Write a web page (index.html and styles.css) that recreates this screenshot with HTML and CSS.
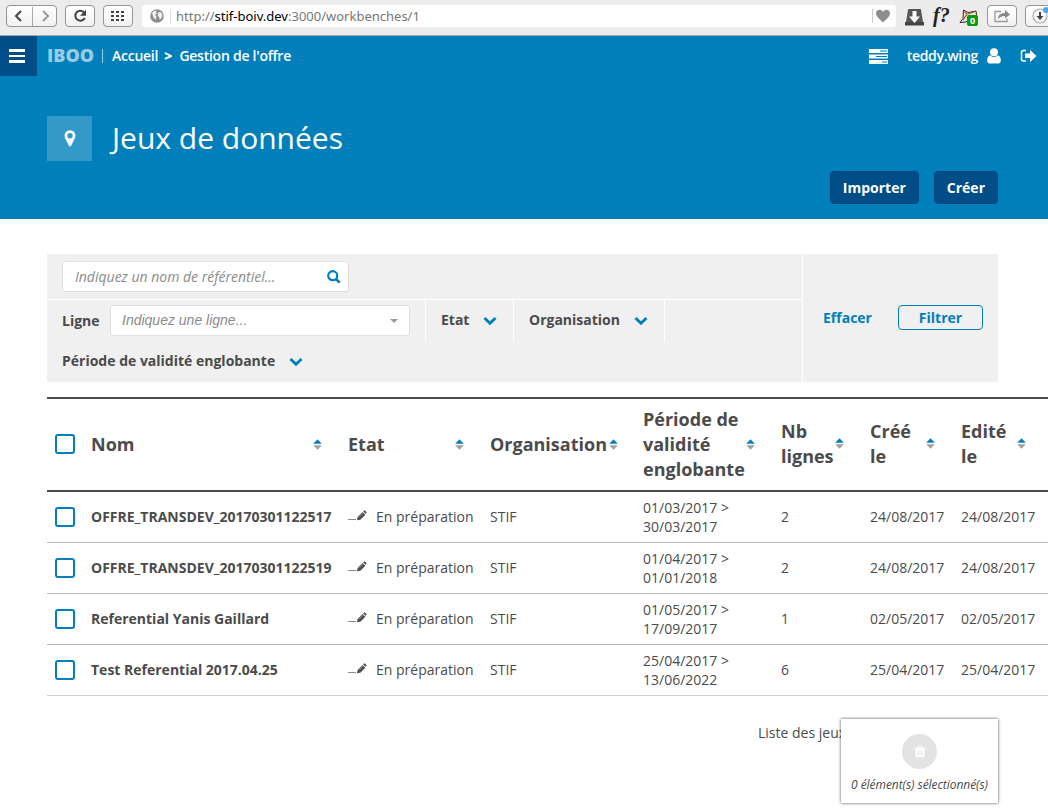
FILE: index.html
```html
<!DOCTYPE html>
<html lang="fr">
<head>
  <meta charset="UTF-8" />
  <meta name="viewport" content="width=device-width, initial-scale=1.0" />
  <title>Jeux de données</title>
  <link rel="stylesheet" href="styles.css">
</head>
<body>
  <!-- shared icons -->
  <svg class="sprite" aria-hidden="true">
    <symbol id="chevron" viewBox="0 0 14 10"><path d="M1.500 2L7 7.300 12.500 2" fill="none" stroke="#007fbb" stroke-width="2.900"/></symbol>
    <symbol id="sort" viewBox="0 0 9 11"><path d="M.2 4.800L4.500.3l4.300 4.500z" fill="#007fbb"/><path d="M.2 6.300h8.600L4.500 10.700z" fill="#a0a0a0"/></symbol>
    <symbol id="pencil" viewBox="0 0 20 12"><path d="M0 9h8v1H0z" fill="#8a8a8a"/><path d="M9 10.300l.6-3.300 5-5 2.700 2.700-5 5z" fill="#4b4b4b"/><path d="M15.200 1.400l.9-.9q.4-.3.8 0l1.500 1.500q.4.500 0 .9l-.8.9z" fill="#4b4b4b"/><path d="M11 7.200l4.200-4.200" stroke="#aaa" stroke-width=".7"/></symbol>
  </svg>

  <div class="browser">
    <div class="btn nav">
      <svg width="50" height="20" viewBox="0 0 50 20"><path d="M14 5L9 10l5 5" fill="none" stroke="#444" stroke-width="2"/><path d="M25.500 1v19" stroke="#aaa"/><path d="M36 5l5 5-5 5" fill="none" stroke="#999" stroke-width="2"/></svg>
    </div>
    <div class="btn reload">
      <svg width="16" height="16" viewBox="0 0 16 16"><path d="M12.300 4.600A5 5 0 1 0 12.800 10" fill="none" stroke="#444" stroke-width="2"/><path d="M14 1.800v6H8z" fill="#444"/></svg>
    </div>
    <div class="btn grid">
      <svg width="14" height="12" viewBox="0 0 14 12"><path d="M0 2h14M0 6h14M0 10h14" stroke="#444" stroke-width="2" stroke-dasharray="3 2"/></svg>
    </div>
    <div class="address">
      <svg width="14" height="14" viewBox="0 0 14 14"><circle cx="7" cy="7" r="6.800" fill="#8c8c8c"/><path d="M2 4l2-2 3-.4-1 2 1 1-2 1.500 1.500 1.500-1 3.400-2-2.500z" fill="#eee"/><path d="M8.500 3l3 .5 1 3.500-1.300 2.500-1.500 1.200L9 8 7.500 6.500z" fill="#eee"/></svg>
      <span class="url"><span>http://</span>stif-boiv.dev<span>:3000/workbenches/1</span></span>
      <svg class="heart" width="22" height="16" viewBox="0 0 22 16"><path d="M.5 1v14" stroke="#ccc"/><path d="M11 14.500C7.500 11 4 8.500 4 5.500 4 1.500 9 .5 11 4c2-3.500 7-2.500 7 1.500 0 3-3.500 5.500-7 9z" fill="#8e8e8e"/></svg>
    </div>
    <div class="extensions">
      <svg width="19" height="18" viewBox="0 0 19 18"><path d="M3 2q0-1 1-1h11q1 0 1 1l2 12H1z" fill="#555"/><path d="M0 14h19v3.500H0z" fill="#444"/><path d="M7.500 3h4v5.500h3.500L9.500 15 4 8.500h3.500z" fill="#fff"/></svg>
      <span class="whatfont">f?</span>
      <span class="fox">
        <svg width="19" height="18" viewBox="0 0 19 18"><path d="M1 14.500l3-4L4.500 2 9 4.500l8-1.500.5 4L12 10l-5 4z" fill="#efe6da" stroke="#3b2b20"/><path d="M5.500 3.500L8 6l-4 6M9 6l6-2" fill="none" stroke="#a45d2d" stroke-width="1.300"/></svg>
        <span class="count">0</span>
      </span>
    </div>
    <div class="btn share">
      <svg width="18" height="16" viewBox="0 0 18 16"><path d="M8 3.500H2v10h12v-3" fill="none" stroke="#999" stroke-width="1.300"/><path d="M5 11c0-4 3-6 7-6V2l5 4.500-5 4V8C9 8 7 9 5 11z" fill="#888"/></svg>
    </div>
    <div class="btn download">
      <svg width="18" height="18" viewBox="0 0 18 18"><circle cx="9" cy="9" r="7" fill="none" stroke="#aaa" stroke-width="1.200"/><path d="M8 5h2v4h2.500L9 13 5.500 9H8z" fill="#444"/></svg>
      <span class="dot"></span>
    </div>
  </div>

  <header>
    <div class="topbar">
      <div class="burger"><span></span><span></span><span></span></div>
      <div class="brand">IBOO</div>
      <div class="breadcrumb"><span>Accueil</span><b>&gt;</b><span class="current">Gestion de l'offre</span></div>
      <div class="user">
        <svg class="tasks" width="19" height="15" viewBox="0 0 19 15"><path d="M0 0h19v4H0zM0 5.500h19v4H0zM0 11h19v4H0z" fill="#fff"/><path d="M11 2h7M7 7.500h11M13 13h5" stroke="#007fbb" stroke-width="1"/></svg>
        <span class="name">teddy.wing</span>
        <svg class="person" width="14" height="16" viewBox="0 0 14 16"><circle cx="7" cy="4.200" r="4" fill="#fff"/><path d="M3.500 7.500Q7 10.500 10.500 7.500q3.500 0 3.300 5.500Q13.500 15.600 11.500 15.600h-9Q.4 15.600.2 13 0 7.500 3.500 7.500z" fill="#fff"/></svg>
        <svg class="logout" width="17" height="14" viewBox="0 0 17 14"><path d="M6 1.500H3.500q-2 0-2 2v6.500q0 2 2 2H6" fill="none" stroke="#fff" stroke-width="1.500"/><path d="M5 4.500h5V1l6.500 6-6.500 6V9H5z" fill="#fff"/></svg>
      </div>
    </div>
    <div class="title">
      <div class="title-icon">
        <svg width="12" height="17" viewBox="0 0 12 17"><path fill-rule="evenodd" d="M6 .3a5.300 5.300 0 0 1 5.400 5.400c0 1-.2 1.700-.5 2.400L7.200 15.700q-1.200 1.500-2.400 0L1.100 8.100C.8 7.400.6 6.700.6 5.700A5.300 5.300 0 0 1 6 .3zM6 3a2.700 2.700 0 1 0 0 5.400A2.700 2.700 0 0 0 6 3z" fill="#fff"/></svg>
      </div>
      <h1>Jeux de données</h1>
    </div>
    <div class="actions">
      <a class="action">Importer</a>
      <a class="action">Créer</a>
    </div>
  </header>

  <main>
    <form class="filters">
      <div class="fields">
        <div class="row search-row">
          <div class="input search">
            <span>Indiquez un nom de référentiel...</span>
            <svg width="14" height="14" viewBox="0 0 14 14"><circle cx="5.700" cy="5.700" r="4.500" fill="none" stroke="#007fbb" stroke-width="2.200"/><path d="M9 9l3.700 3.700" stroke="#007fbb" stroke-width="2.600"/></svg>
          </div>
        </div>
        <div class="row">
          <div class="field line">
            <label>Ligne</label>
            <div class="input select"><span>Indiquez une ligne...</span><i class="caret"></i></div>
          </div>
          <div class="field state">Etat<svg class="chevron"><use href="#chevron"/></svg></div>
          <div class="field orga">Organisation<svg class="chevron"><use href="#chevron"/></svg></div>
        </div>
        <div class="row last">
          <div class="field period">Période de validité englobante<svg class="chevron"><use href="#chevron"/></svg></div>
        </div>
      </div>
      <div class="submit">
        <a class="clear">Effacer</a>
        <a class="filter">Filtrer</a>
      </div>
    </form>

    <table>
      <colgroup>
        <col class="c-check"><col class="c-name"><col class="c-state"><col class="c-orga"><col class="c-period"><col class="c-lines"><col class="c-created"><col class="c-edited">
      </colgroup>
      <thead>
        <tr>
          <th><span class="checkbox"></span></th>
          <th><div class="head">Nom<svg class="sort"><use href="#sort"/></svg></div></th>
          <th><div class="head">Etat<svg class="sort"><use href="#sort"/></svg></div></th>
          <th><div class="head">Organisation<svg class="sort"><use href="#sort"/></svg></div></th>
          <th><div class="head">Période de<br>validité<br>englobante<svg class="sort"><use href="#sort"/></svg></div></th>
          <th class="two-lines"><div class="head">Nb<br>lignes<svg class="sort"><use href="#sort"/></svg></div></th>
          <th class="two-lines"><div class="head">Créé<br>le<svg class="sort"><use href="#sort"/></svg></div></th>
          <th class="two-lines"><div class="head">Edité<br>le<svg class="sort"><use href="#sort"/></svg></div></th>
        </tr>
      </thead>
      <tbody>
        <tr>
          <td><span class="checkbox"></span></td>
          <td class="name">OFFRE_TRANSDEV_20170301122517</td>
          <td><svg class="pencil"><use href="#pencil"/></svg>En préparation</td>
          <td>STIF</td>
          <td class="dates">01/03/2017 &gt;<br>30/03/2017</td>
          <td>2</td>
          <td>24/08/2017</td>
          <td>24/08/2017</td>
        </tr>
        <tr>
          <td><span class="checkbox"></span></td>
          <td class="name">OFFRE_TRANSDEV_20170301122519</td>
          <td><svg class="pencil"><use href="#pencil"/></svg>En préparation</td>
          <td>STIF</td>
          <td class="dates">01/04/2017 &gt;<br>01/01/2018</td>
          <td>2</td>
          <td>24/08/2017</td>
          <td>24/08/2017</td>
        </tr>
        <tr>
          <td><span class="checkbox"></span></td>
          <td class="name">Referential Yanis Gaillard</td>
          <td><svg class="pencil"><use href="#pencil"/></svg>En préparation</td>
          <td>STIF</td>
          <td class="dates">01/05/2017 &gt;<br>17/09/2017</td>
          <td>1</td>
          <td>02/05/2017</td>
          <td>02/05/2017</td>
        </tr>
        <tr>
          <td><span class="checkbox"></span></td>
          <td class="name">Test Referential 2017.04.25</td>
          <td><svg class="pencil"><use href="#pencil"/></svg>En préparation</td>
          <td>STIF</td>
          <td class="dates">25/04/2017 &gt;<br>13/06/2022</td>
          <td>6</td>
          <td>25/04/2017</td>
          <td>25/04/2017</td>
        </tr>
      </tbody>
    </table>

    <div class="pagination">Liste des jeux</div>
  </main>

  <div class="selection">
    <div class="trash">
      <svg width="12" height="13" viewBox="0 0 12 13"><path fill-rule="evenodd" d="M.5 2.500h3L4.300.5h3.400l.8 2h3v1.300H.5zM4.600 2.500h2.800l-.4-1H5z" fill="#fff"/><path d="M1.500 3.800h9V11q0 1.500-1.500 1.500H3Q1.500 12.500 1.500 11z" fill="#fff"/><path d="M4 5.300v5M6 5.300v5M8 5.300v5" stroke="#e3e3e3" stroke-width=".8"/></svg>
    </div>
    <div class="count-text">0 élément(s) sélectionné(s)</div>
  </div>
</body>
</html>
```
FILE: styles.css
```css
* {
  box-sizing: border-box;
}
body {
  margin: 0;
  height: 809px;
  overflow: hidden;
  position: relative;
  font-family: 'Open Sans', sans-serif;
  font-size: 14px;
  line-height: 19px;
  color: #4b4b4b;
  background: #fff;
}
svg {
  display: block;
  flex: none;
}
.sprite {
  display: none;
}

/* browser toolbar */
.browser {
  display: flex;
  align-items: flex-start;
  height: 36px;
  padding: 5px 0 0 6px;
  background: #ececec;
  border-bottom: 1px solid #a5a5a5;
  overflow: hidden;
}
.btn {
  display: flex;
  flex: none;
  align-items: center;
  justify-content: center;
  width: 30px;
  height: 22px;
  border: 1px solid #959595;
  border-radius: 4px;
  background: linear-gradient(#fff, #f1f1f1);
}
.btn.nav {
  width: 51px;
}
.btn.reload {
  margin-left: 8px;
}
.btn.grid {
  margin-left: 8px;
}
.address {
  display: flex;
  flex: none;
  align-items: center;
  width: 754px;
  height: 22px;
  margin-left: 9px;
  padding: 0 0 0 8px;
  border-radius: 3px;
  background: #fff;
}
.url {
  flex: 1;
  margin-left: 6px;
  padding-left: 5px;
  border-left: 1px solid #ddd;
  font-family: 'Noto Sans', sans-serif;
  font-size: 13px;
  line-height: 15px;
  color: #000;
}
.url span {
  color: #777;
}
.heart {
  margin-right: 2px;
}
.extensions {
  display: flex;
  flex: none;
  align-items: flex-start;
  width: 82px;
  margin-left: 9px;
  padding-top: 3px;
}
.whatfont {
  margin: -4px 0 0 9px;
  width: 20px;
  font: italic bold 20px/22px 'Liberation Serif', serif;
  color: #222;
}
.fox {
  position: relative;
  margin-left: 6px;
}
.count {
  position: absolute;
  left: 8px;
  top: 7px;
  width: 11px;
  height: 11px;
  border-radius: 2px;
  background: #0a9a12;
  color: #fff;
  font-size: 9px;
  font-weight: bold;
  line-height: 11px;
  text-align: center;
}
.btn.download {
  position: relative;
  margin-left: 8px;
}
.dot {
  position: absolute;
  right: 5px;
  top: 1px;
  width: 6px;
  height: 6px;
  border-radius: 50%;
  background: #4aa5f5;
}

/* page header */
header {
  height: 183px;
  background: #007fbb;
  color: #fff;
}
.topbar {
  display: flex;
  align-items: center;
  height: 40px;
}
.burger {
  display: flex;
  flex-direction: column;
  align-items: center;
  justify-content: center;
  gap: 3px;
  width: 37px;
  height: 40px;
  padding-right: 3px;
  background: #004d87;
}
.burger span {
  width: 16px;
  height: 2.500px;
  background: #fff;
}
.brand {
  width: 55px;
  margin: 0 0 2px 10px;
  font-size: 18px;
  font-weight: 800;
  color: #99cce4;
}
.breadcrumb {
  display: flex;
  height: 14px;
  align-items: center;
  padding: 0 0 1px 9px;
  border-left: 1px solid #99cce4;
  font-weight: 600;
}
.breadcrumb span {
  margin-top: -1px;
  letter-spacing: -0.25px;
}
.breadcrumb b {
  margin: -1px 7px 0 6px;
}
.user {
  display: flex;
  align-items: center;
  margin-left: auto;
  padding-right: 11px;
  font-weight: 600;
}
.user .name {
  margin: -2px 9px 0 19px;
  letter-spacing: -0.3px;
}
.logout {
  margin-left: 19px;
}
.title {
  display: flex;
  align-items: center;
  height: 45px;
  margin: 40px 0 0 47px;
}
.title-icon {
  display: flex;
  align-items: center;
  justify-content: center;
  width: 45px;
  height: 45px;
  background: #3399c9;
}
h1 {
  margin: -2px 0 0 20px;
  font-size: 30px;
  line-height: 40px;
  font-weight: 500;
}
.actions {
  display: flex;
  justify-content: flex-end;
  gap: 15px;
  margin: 10px 50px 0 0;
}
.action {
  height: 33px;
  padding: 0 12px;
  border: 1px solid #00457c;
  border-radius: 4px;
  background: #004d87;
  font-weight: bold;
  line-height: 32px;
}

/* filters */
main {
  padding: 35px 0 0 47px;
}
.filters {
  display: flex;
  width: 951px;
  height: 128px;
  background: #f0f0f0;
  font-weight: bold;
}
.fields {
  width: 756px;
  border-right: 1px solid #fff;
}
.row {
  display: flex;
  height: 42px;
}
.search-row {
  height: 46px;
  padding: 7px 0 0 15px;
  border-bottom: 1px solid #fff;
}
.input {
  display: flex;
  align-items: center;
  justify-content: space-between;
  height: 31px;
  padding: 0 7px 0 12px;
  border: 1px solid #dfdfdf;
  border-radius: 3px;
  background: #fff;
  color: #8b8b8b;
  font-style: italic;
  font-weight: normal;
}
.search {
  width: 287px;
}
.field {
  display: flex;
  align-items: center;
  padding: 0 0 3px 15px;
  border-right: 1px solid #fff;
}
.line {
  width: 379px;
  padding-bottom: 1px;
}
.line label {
  width: 48px;
}
.select {
  width: 300px;
  padding: 0 11px;
  font-family: 'Liberation Sans', sans-serif;
}
.caret {
  border: 4px solid transparent;
  border-top-color: #999;
  border-bottom: 0;
}
.state {
  width: 88px;
}
.orga {
  width: 151px;
}
.chevron {
  width: 14px;
  height: 10px;
  margin: 3px 0 0 14px;
}
.last {
  height: 40px;
}
.period {
  border: none;
}
.submit {
  display: flex;
  align-items: center;
  padding: 0 0 2px 20px;
  color: #007fbb;
}
.clear {
  width: 75px;
}
.filter {
  width: 85px;
  height: 25px;
  border: 1px solid #007fbb;
  border-radius: 4px;
  line-height: 23px;
  text-align: center;
}

/* datasets table */
table {
  width: 1006px;
  margin-top: 15px;
  table-layout: fixed;
  border-collapse: separate;
  border-spacing: 0;
}
.c-check { width: 36px; }
.c-name { width: 257px; }
.c-state { width: 142px; }
.c-orga { width: 153px; }
.c-period { width: 138px; }
.c-lines { width: 89px; }
.c-created { width: 91px; }
.c-edited { width: 100px; }
th {
  height: 95px;
  padding: 0 8px;
  border-top: 2px solid #4b4b4b;
  border-bottom: 2px solid #4b4b4b;
  font-size: 18px;
  line-height: 25px;
  text-align: left;
  white-space: nowrap;
}
th:first-child,
th.two-lines {
  padding-bottom: 1px;
}
td {
  height: 51px;
  padding: 0 8px 1px;
  border-bottom: 1px solid #b7b7b7;
  white-space: nowrap;
}
td:first-child,
td.dates {
  padding-bottom: 0;
}
tr:last-child td {
  border-color: #d0d0d0;
}
th:last-child {
  padding-right: 17px;
}
td.name {
  font-weight: bold;
}
.head {
  position: relative;
}
.sort {
  position: absolute;
  right: 10px;
  top: 50%;
  width: 9px;
  height: 11px;
  margin-top: -6px;
}
th:nth-child(4) .sort {
  right: 9px;
}
.checkbox {
  display: block;
  width: 20px;
  height: 20px;
  border: 2px solid #007fbb;
  border-radius: 3px;
}
.pencil {
  display: inline-block;
  width: 20px;
  height: 12px;
  margin-right: 8px;
}
.pagination {
  margin: 27px 0 0 711px;
}

/* floating selection box */
.selection {
  position: absolute;
  left: 841px;
  top: 719px;
  display: flex;
  flex-direction: column;
  align-items: center;
  width: 157px;
  height: 84px;
  padding-top: 15px;
  background: #fff;
  box-shadow: 0 0 3px rgba(0, 0, 0, 0.7);
}
.trash {
  display: flex;
  align-items: center;
  justify-content: center;
  width: 35px;
  height: 35px;
  border-radius: 50%;
  background: #e3e3e3;
}
.count-text {
  margin-top: 6px;
  font-size: 12px;
  font-style: italic;
  letter-spacing: -0.05px;
  white-space: nowrap;
}
```
